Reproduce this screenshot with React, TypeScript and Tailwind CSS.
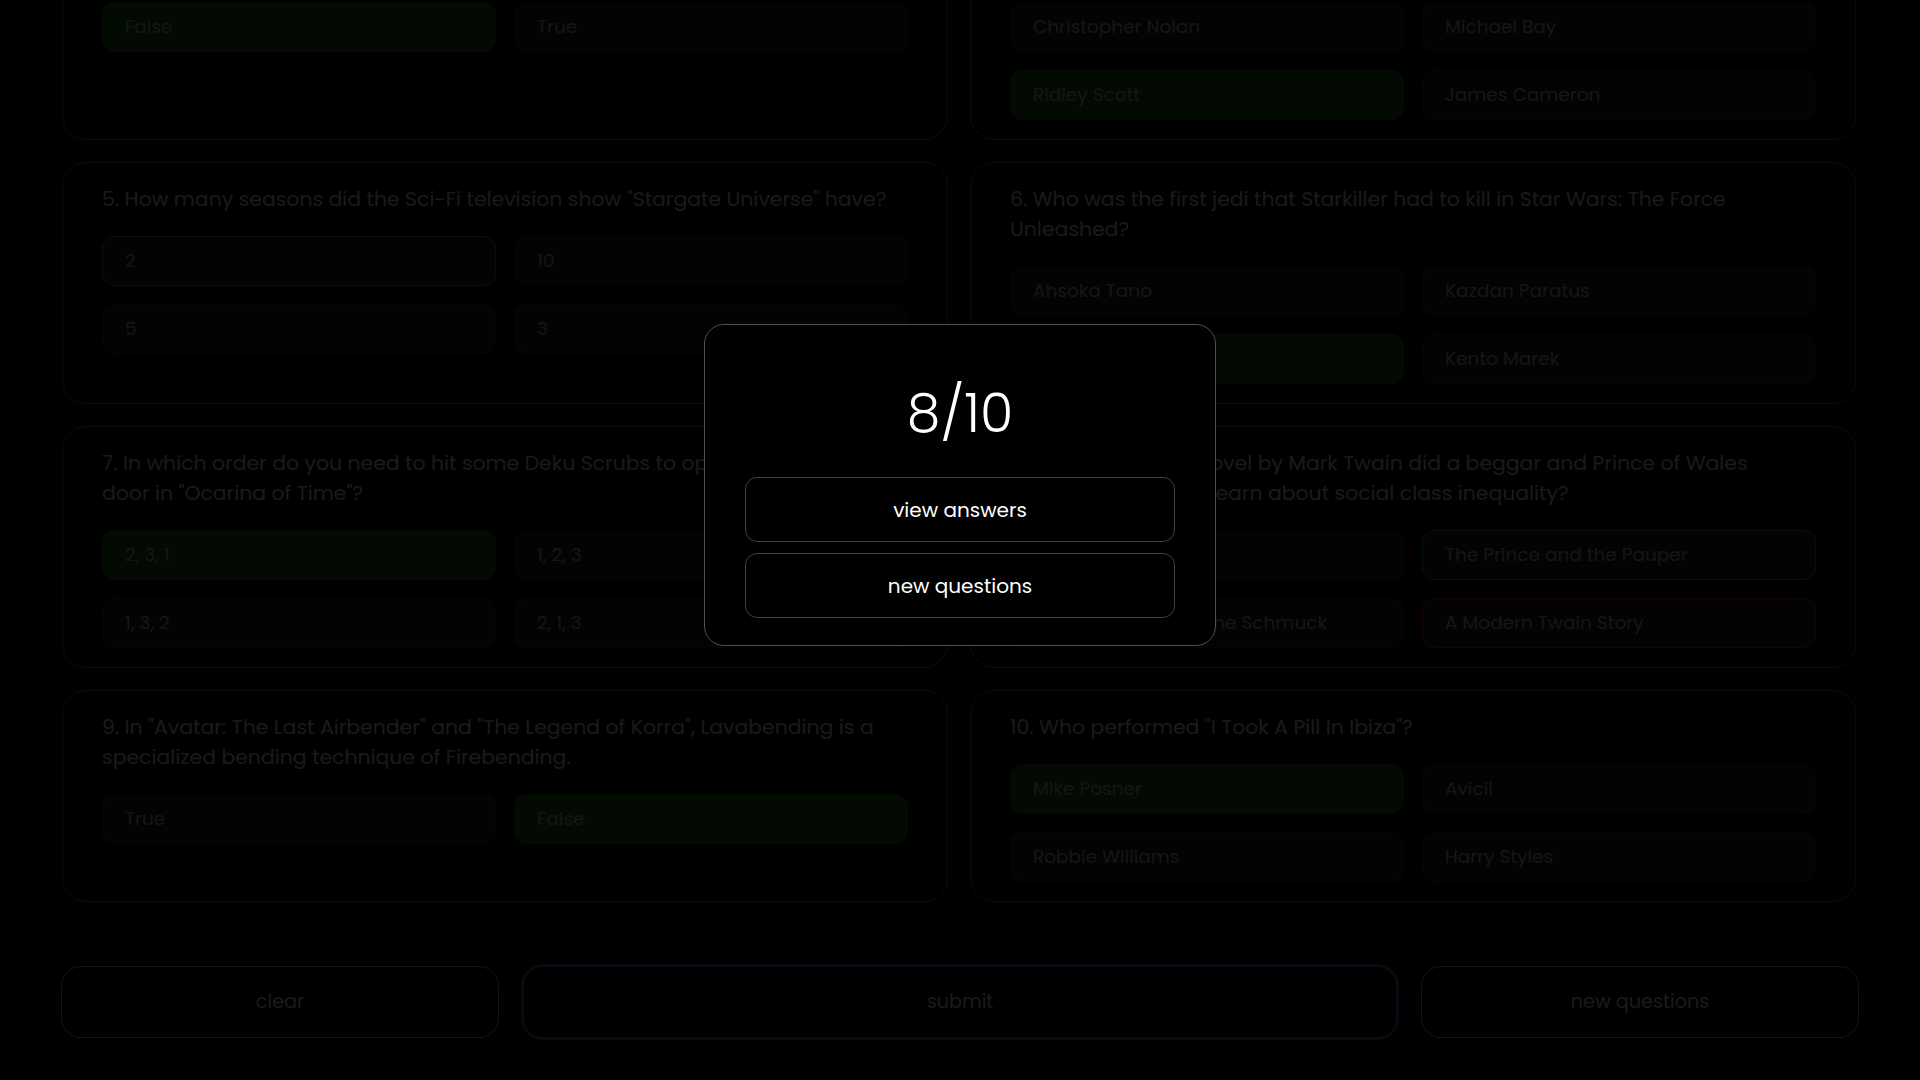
import React from 'react';

type Mark = 'picked' | 'correct' | 'wrong' | undefined;

interface Answer {
    text: string;
    mark?: Mark;
}

interface Question {
    id: number;
    text: string;
    answers: Answer[];
}

// Results view: picked = chosen and right, correct = the right one you missed, wrong = chosen but wrong
const questions: Question[] = [
    {
        id: 3,
        text: 'The Great Wall of China is visible from the Moon with the naked eye.',
        answers: [{ text: 'False', mark: 'picked' }, { text: 'True' }]
    },
    {
        id: 4,
        text: 'Who directed the 1979 film "Alien"?',
        answers: [
            { text: 'Christopher Nolan' },
            { text: 'Michael Bay' },
            { text: 'Ridley Scott', mark: 'picked' },
            { text: 'James Cameron' }
        ]
    },
    {
        id: 5,
        text: 'How many seasons did the Sci-Fi television show "Stargate Universe" have?',
        answers: [{ text: '2', mark: 'correct' }, { text: '10' }, { text: '5' }, { text: '3' }]
    },
    {
        id: 6,
        text: 'Who was the first jedi that Starkiller had to kill in Star Wars: The Force Unleashed?',
        answers: [
            { text: 'Ahsoka Tano' },
            { text: 'Kazdan Paratus' },
            { text: 'Rahm Kota', mark: 'picked' },
            { text: 'Kento Marek' }
        ]
    },
    {
        id: 7,
        text: 'In which order do you need to hit some Deku Scrubs to open the boss room door in "Ocarina of Time"?',
        answers: [{ text: '2, 3, 1', mark: 'picked' }, { text: '1, 2, 3' }, { text: '1, 3, 2' }, { text: '2, 1, 3' }]
    },
    {
        id: 8,
        text: 'In which classic novel by Mark Twain did a beggar and Prince of Wales switch clothes, and learn about social class inequality?',
        answers: [
            { text: 'Hucklebery Finn' },
            { text: 'The Prince and the Pauper', mark: 'correct' },
            { text: 'The Merchant and the Schmuck' },
            { text: 'A Modern Twain Story', mark: 'wrong' }
        ]
    },
    {
        id: 9,
        text: 'In "Avatar: The Last Airbender" and "The Legend of Korra", Lavabending is a specialized bending technique of Firebending.',
        answers: [{ text: 'True' }, { text: 'False', mark: 'picked' }]
    },
    {
        id: 10,
        text: 'Who performed "I Took A Pill In Ibiza"?',
        answers: [
            { text: 'Mike Posner', mark: 'picked' },
            { text: 'Avicii' },
            { text: 'Robbie Williams' },
            { text: 'Harry Styles' }
        ]
    }
];

function answerClass(mark: Mark) {
    if (mark === 'picked') return 'bg-[#146a1b] border-[#146a1b]';
    if (mark === 'correct') return 'bg-[#272727] border-[#25c24a]';
    if (mark === 'wrong') return 'bg-[#272727] border-[#e0254f]';
    return 'bg-[#272727] border-[#383838]';
}

function QuestionCard({ question }: { question: Question }) {
    return (
        <div className="rounded-3xl border border-[#767676] px-[39px] pt-[21px] pb-[19px]">
            <p className="pr-[10px] text-[20.4px] leading-[30px] text-white">
                {question.id}. {question.text}
            </p>
            <div className="mt-[22px] grid grid-cols-2 gap-[18px]">
                {question.answers.map((answer) => (
                    <button
                        key={answer.text}
                        className={`flex h-[50px] items-center rounded-xl border px-[22px] text-left text-[18.5px] text-[#d4d4d4] ${answerClass(answer.mark)}`}
                    >
                        {answer.text}
                    </button>
                ))}
            </div>
        </div>
    );
}

export default function App() {
    return (
        <div className="relative flex h-screen flex-col overflow-hidden bg-black font-[Poppins,Inter,sans-serif]">
            {/* Questions, scrolled to the bottom */}
            <main className="flex min-h-0 flex-1 flex-col justify-end overflow-hidden pl-[62px] pr-16">
                <div className="grid grid-cols-2 gap-[22px]">
                    {questions.map((q) => (
                        <QuestionCard key={q.id} question={q} />
                    ))}
                </div>
            </main>

            {/* Footer actions */}
            <footer className="flex gap-6 px-[61px] pt-16 pb-[42px]">
                <button className="h-[72px] flex-1 rounded-[20px] border border-[#c8c8c8] text-[19.2px] text-white">
                    clear
                </button>
                {/* submit keeps its focus ring after being clicked */}
                <button className="h-[72px] flex-[2] rounded-[20px] border border-[#4a7cc9] text-[19.2px] text-white outline-2 outline-offset-0 outline-[#4a7cc9]">
                    submit
                </button>
                <button className="h-[72px] flex-1 rounded-[20px] border border-[#c8c8c8] text-[19.2px] text-white">
                    new questions
                </button>
            </footer>

            {/* Score overlay */}
            <div className="absolute inset-0 bg-black/90" />
            <div className="absolute left-1/2 top-[30%] w-[512px] -translate-x-1/2 rounded-[20px] border border-[#505050] bg-black px-10 pt-[46px] pb-[27px]">
                <div className="text-center text-[54px] font-light leading-[84px] text-white">8/10</div>
                <div className="mt-[22px] flex flex-col gap-[11px]">
                    <button className="h-[65px] rounded-xl border border-[#404040] text-[20px] text-white">
                        view answers
                    </button>
                    <button className="h-[65px] rounded-xl border border-[#404040] text-[20px] text-white">
                        new questions
                    </button>
                </div>
            </div>
        </div>
    );
}
